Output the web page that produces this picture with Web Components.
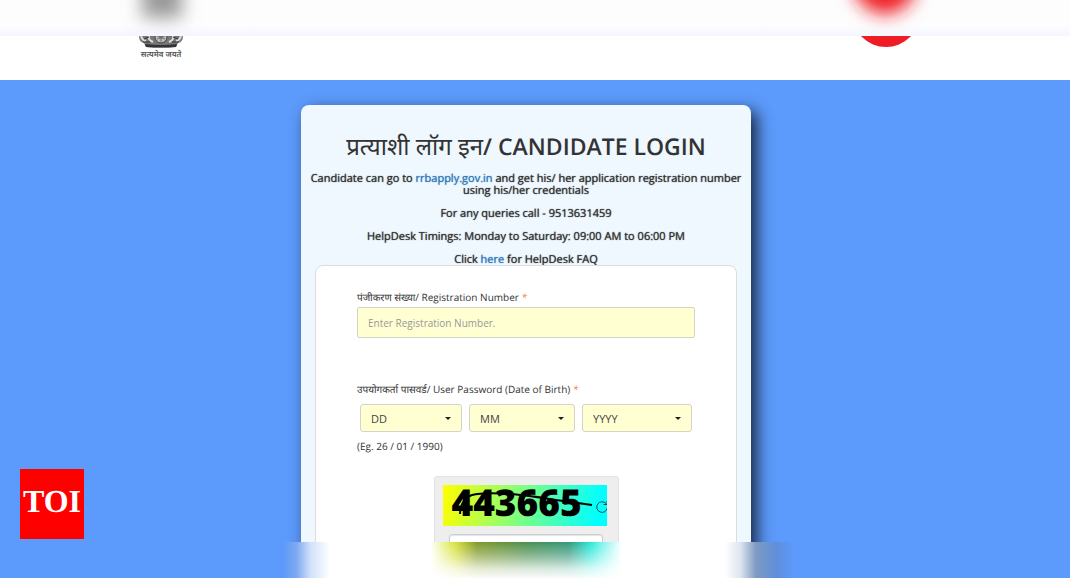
<!DOCTYPE html>
<html lang="hi">
<head>
<meta charset="utf-8">
<title>Candidate Login</title>
<style>
    body{
        margin: 0;
        font-family: "Open Sans", "Noto Sans", "Noto Sans Devanagari", sans-serif;
        font-size: 10px;
        line-height: 12px;
        color: #333;
        text-rendering: geometricPrecision;
    }
    b{
        font-size: 23px;
        font-weight: 600;
    }
</style>
</head>
<body>
<login-page>
    <site-header slot="header"></site-header>
    <login-card>
        <span slot="title">प्रत्याशी लॉग इन<b>/ CANDIDATE LOGIN</b></span>
        <text-field name="registration" placeholder="Enter Registration Number.">पंजीकरण संख्या/ Registration Number</text-field>
        <birth-date>उपयोगकर्ता पासवर्ड/ User Password (Date of Birth)</birth-date>
        <captcha-box code="443665"></captcha-box>
    </login-card>
    <news-badge slot="badge">TOI</news-badge>
</login-page>

<script>
class LoginPage extends HTMLElement{
    constructor(){
        super();
        this.attachShadow({mode: 'open'});
        this.shadowRoot.innerHTML = `
<style>
    :host{
        display: flex;
        flex-direction: column;
        height: 100vh;
        overflow: hidden;
        position: relative;
    }
    .strip{
        flex: 0 0 36px;
        overflow: hidden;
        background: #fff;
    }
    .strip svg{
        display: block;
        width: 100%;
        height: 36px;
    }
    .top{
        background: linear-gradient(#fdfdfe 70%, #f4f7fe);
    }
    main{
        flex: 1;
        min-height: 0;
        overflow: hidden;
        display: flex;
        justify-content: center;
        align-items: flex-start;
        padding: 25px 18px 0 0;
        background: #5c9afb;
    }
</style>
<div class="strip top">
    <svg viewBox="0 0 1070 36" preserveAspectRatio="none" aria-hidden="true">
        <filter id="soft" x="-100%" y="-100%" width="300%" height="300%"><feGaussianBlur stdDeviation="9"/></filter>
        <rect x="142" y="-40" width="40" height="58" fill="#999" filter="url(#soft)"/>
        <ellipse cx="885" cy="-20" rx="32" ry="34" fill="#ee1c24" filter="url(#soft)"/>
    </svg>
</div>
<slot name="header"></slot>
<main><slot></slot></main>
<div class="strip">
    <svg viewBox="0 0 1070 36" preserveAspectRatio="none" aria-hidden="true">
        <defs>
            <linearGradient id="left">
                <stop offset="0" stop-color="#5c9afb"/>
                <stop offset=".86" stop-color="#5c9afb"/>
                <stop offset=".9" stop-color="#80aaf1"/>
                <stop offset=".94" stop-color="#d0e0fa"/>
                <stop offset="1" stop-color="#fff"/>
            </linearGradient>
            <linearGradient id="right">
                <stop offset="0" stop-color="#fff"/>
                <stop offset=".045" stop-color="#dce4ef"/>
                <stop offset=".09" stop-color="#7e9ac2"/>
                <stop offset=".15" stop-color="#5f8fdb"/>
                <stop offset=".2" stop-color="#5c9afb"/>
            </linearGradient>
            <linearGradient id="glow">
                <stop offset="0" stop-color="#d8e820" stop-opacity="0"/>
                <stop offset=".13" stop-color="#d6e03c"/>
                <stop offset=".24" stop-color="#819a27"/>
                <stop offset=".5" stop-color="#4c8f50"/>
                <stop offset=".72" stop-color="#35977c"/>
                <stop offset=".84" stop-color="#2ceada"/>
                <stop offset="1" stop-color="#40f0ea" stop-opacity="0"/>
            </linearGradient>
            <linearGradient id="fade" x2="0" y2="1">
                <stop offset="0" stop-color="#fff"/>
                <stop offset=".35" stop-color="#aaa"/>
                <stop offset=".75" stop-color="#333"/>
                <stop offset="1" stop-color="#0a0a0a"/>
            </linearGradient>
            <mask id="down"><rect x="420" width="220" height="36" fill="url(#fade)"/></mask>
        </defs>
        <rect width="330" height="36" fill="url(#left)"/>
        <rect x="725" width="345" height="36" fill="url(#right)"/>
        <rect x="431" width="191" height="36" fill="url(#glow)" mask="url(#down)"/>
    </svg>
</div>
<slot name="badge"></slot>`;
    }
}

class SiteHeader extends HTMLElement{
    constructor(){
        super();
        this.attachShadow({mode: 'open'});
        this.shadowRoot.innerHTML = `
<style>
    :host{
        display: flex;
        flex: 0 0 44px;
        justify-content: space-between;
        align-items: flex-start;
        padding: 0 14% 0 13%;
        overflow: hidden;
        background: #fff;
    }
    .emblem{
        display: flex;
        flex-direction: column;
        align-items: center;
        width: 44px;
        font-size: 8px;
        line-height: 12px;
        font-weight: 600;
        color: #555;
        white-space: nowrap;
    }
    svg{
        display: block;
    }
</style>
<div class="emblem">
    <svg width="44" height="13" viewBox="0 0 44 13" aria-hidden="true">
        <path d="M0 0h44q0 6-5 7l-2 4q-15 1-30 0L5 7Q0 6 0 0Z" fill="#777"/>
        <path d="M2 0q1 4 5 5M10 0q-1 4 4 6M34 0q1 4-4 6M42 0q-1 4-5 5" fill="none" stroke="#ddd" stroke-width="2"/>
        <path d="M5 3l5-2M34 1l5 2M4 6h7M33 6h7" stroke="#333"/>
        <circle cx="22" cy="1" r="6" fill="#bbb" stroke="#444"/>
        <circle cx="22" cy="1" r="2" fill="#666"/>
        <path d="M22-4v10M18 0l8 3M26 0l-8 3" stroke="#777"/>
        <path d="M6 8q16 2 32 0l-1 3q-15 1-30 0Z" fill="#333"/>
    </svg>
    <span>सत्यमेव जयते</span>
</div>
<svg width="68" height="12" viewBox="0 0 68 12" aria-hidden="true"><circle cx="34" cy="-23" r="34" fill="#ee1c24"/></svg>`;
    }
}

class LoginCard extends HTMLElement{
    constructor(){
        super();
        this.attachShadow({mode: 'open'});
        this.shadowRoot.innerHTML = `
<style>
    :host{
        display: block;
        box-sizing: border-box;
        width: 100%;
        max-width: 450px;
        padding: 23px 14px;
        border-radius: 8px;
        background: #eff7ff;
        box-shadow: 6px 6px 16px rgba(0, 0, 0, 0.75);
    }
    h1{
        margin: 0;
        font-size: 24px;
        line-height: 36px;
        font-weight: 400;
        text-align: center;
    }
    .info{
        margin: 0 -8px;
        font-size: 11px;
        line-height: 12px;
        text-align: center;
        text-shadow: 0 0 1px currentColor;
    }
    p{
        margin: 0 0 11px;
    }
    .info p:first-child{
        margin-top: 8px;
    }
    a{
        color: #337ab7;
        text-decoration: none;
    }
    form{
        position: relative;
        display: flex;
        flex-direction: column;
        margin-top: -12px;
        padding: 24px 41px;
        border: 1px solid #ddd;
        border-radius: 8px;
        background: #fff;
    }
</style>
<h1><slot name="title"></slot></h1>
<div class="info">
    <p>Candidate can go to <a href="#apply">rrbapply.gov.in</a> and get his/ her application registration number using his/her credentials</p>
    <p>For any queries call - 9513631459</p>
    <p>HelpDesk Timings: Monday to Saturday: 09:00 AM to 06:00 PM</p>
    <p>Click <a href="#faq">here</a> for HelpDesk FAQ</p>
</div>
<form><slot></slot></form>`;
    }
}

class TextField extends HTMLElement{
    constructor(){
        super();
        this.attachShadow({mode: 'open'});
        this.shadowRoot.innerHTML = `
<style>
    :host{
        display: block;
        margin-bottom: 44px;
    }
    label{
        display: block;
        margin-bottom: 3px;
        line-height: 14px;
    }
    i{
        color: #f47b30;
    }
    input{
        display: block;
        box-sizing: border-box;
        width: 100%;
        height: 31px;
        padding: 0 10px;
        border: 1px solid #d3d3c8;
        border-radius: 2px;
        background: #ffffd2;
        font: inherit;
        color: #333;
    }
    input::placeholder{
        color: #999;
    }
</style>
<label for="field"><slot></slot> <i>*</i></label>
<input id="field" type="text">`;
    }
    connectedCallback(){
        const input = this.shadowRoot.querySelector('input');
        input.name = this.getAttribute('name');
        input.placeholder = this.getAttribute('placeholder');
    }
}

class BirthDate extends HTMLElement{
    constructor(){
        super();
        this.attachShadow({mode: 'open'});
        this.shadowRoot.innerHTML = `
<style>
    :host{
        display: block;
        margin-bottom: 24px;
    }
    label{
        display: block;
        margin-bottom: 8px;
        line-height: 14px;
    }
    i{
        color: #f47b30;
    }
    .parts{
        display: grid;
        grid-template-columns: 51fr 53fr 55fr;
        gap: 7px;
        margin-bottom: 8px;
        padding: 0 3px;
    }
    select{
        appearance: none;
        width: 100%;
        height: 28px;
        padding: 0 10px;
        border: 1px solid #d3d3c8;
        border-radius: 3px;
        background: #ffffd2 url('data:image/svg+xml,<svg xmlns="http://www.w3.org/2000/svg" width="6" height="3"><path d="M0 0h6L3 3Z" fill="%23222"/></svg>') no-repeat right 10px center;
        font-family: inherit;
        font-size: 11px;
        color: #444;
    }
</style>
<label for="day"><slot></slot> <i>*</i></label>
<div class="parts">
    <select id="day" aria-label="Day"><option>DD</option></select>
    <select id="month" aria-label="Month"><option>MM</option></select>
    <select id="year" aria-label="Year"><option>YYYY</option></select>
</div>
<div>(Eg. 26 / 01 / 1990)</div>`;
        this.fill('day', 1, 31);
        this.fill('month', 1, 12);
        this.fill('year', 1960, 2010);
    }
    fill(id, from, to){
        const select = this.shadowRoot.getElementById(id);
        for(let i = from; i <= to; i++){
            select.add(new Option(String(i).padStart(2, '0')));
        }
    }
}

class CaptchaBox extends HTMLElement{
    constructor(){
        super();
        this.attachShadow({mode: 'open'});
        this.shadowRoot.innerHTML = `
<style>
    :host{
        display: block;
        align-self: center;
        box-sizing: border-box;
        width: 185px;
        padding: 8px 11px 12px 8px;
        border: 1px solid #e2e2e2;
        border-radius: 3px;
        background: #eee;
    }
    .code{
        display: flex;
        align-items: center;
        position: relative;
        height: 41px;
        background: linear-gradient(100deg, #ff0, #0ff 94%);
    }
    .digits{
        padding: 0 0 8px 9px;
        font-size: 37px;
        line-height: 34px;
        font-weight: 800;
        color: #000;
    }
    .line{
        position: absolute;
        left: 0;
        top: 0;
    }
    button{
        position: absolute;
        right: 0;
        top: 15px;
        width: 12px;
        height: 14px;
        padding: 0;
        border: 0;
        overflow: hidden;
        background: none;
        cursor: pointer;
    }
    button svg{
        display: block;
    }
    input{
        display: block;
        box-sizing: border-box;
        width: calc(100% - 10px);
        height: 30px;
        margin: 8px auto 0 6px;
        border: 1px solid #c8cfd2;
        border-radius: 3px;
        background: #fff;
        box-shadow: inset 0 1px 1px rgba(0, 0, 0, 0.1);
    }
</style>
<div class="code">
    <span class="digits"></span>
    <svg class="line" width="164" height="41" viewBox="0 0 164 41" fill="none" stroke="#000" stroke-width="2" aria-hidden="true">
        <path d="M17 29Q18 13 29 10T69 9Q90 11 113 15L149 20"/>
    </svg>
    <button type="button" aria-label="Refresh captcha">
        <svg width="14" height="14" viewBox="0 0 14 14" fill="none" stroke="#174a55"><path d="M11 3.5A5.3 5.3 0 1 0 12.3 8M12 1v3.5H8.5"/></svg>
    </button>
</div>
<input type="text" aria-label="Captcha">`;
    }
    connectedCallback(){
        this.shadowRoot.querySelector('.digits').textContent = this.getAttribute('code');
    }
}

class NewsBadge extends HTMLElement{
    constructor(){
        super();
        this.attachShadow({mode: 'open'});
        this.shadowRoot.innerHTML = `
<style>
    :host{
        display: flex;
        align-items: center;
        justify-content: center;
        position: absolute;
        left: 20px;
        bottom: 39px;
        width: 64px;
        height: 70px;
        background: #f00;
        font-family: "Liberation Serif", serif;
        font-size: 32px;
        line-height: 36px;
        font-weight: 700;
        color: #fff;
    }
    span{
        padding-bottom: 6px;
    }
</style>
<span><slot></slot></span>`;
    }
}

window.customElements.define('login-page', LoginPage);
window.customElements.define('site-header', SiteHeader);
window.customElements.define('login-card', LoginCard);
window.customElements.define('text-field', TextField);
window.customElements.define('birth-date', BirthDate);
window.customElements.define('captcha-box', CaptchaBox);
window.customElements.define('news-badge', NewsBadge);
</script>
</body>
</html>
